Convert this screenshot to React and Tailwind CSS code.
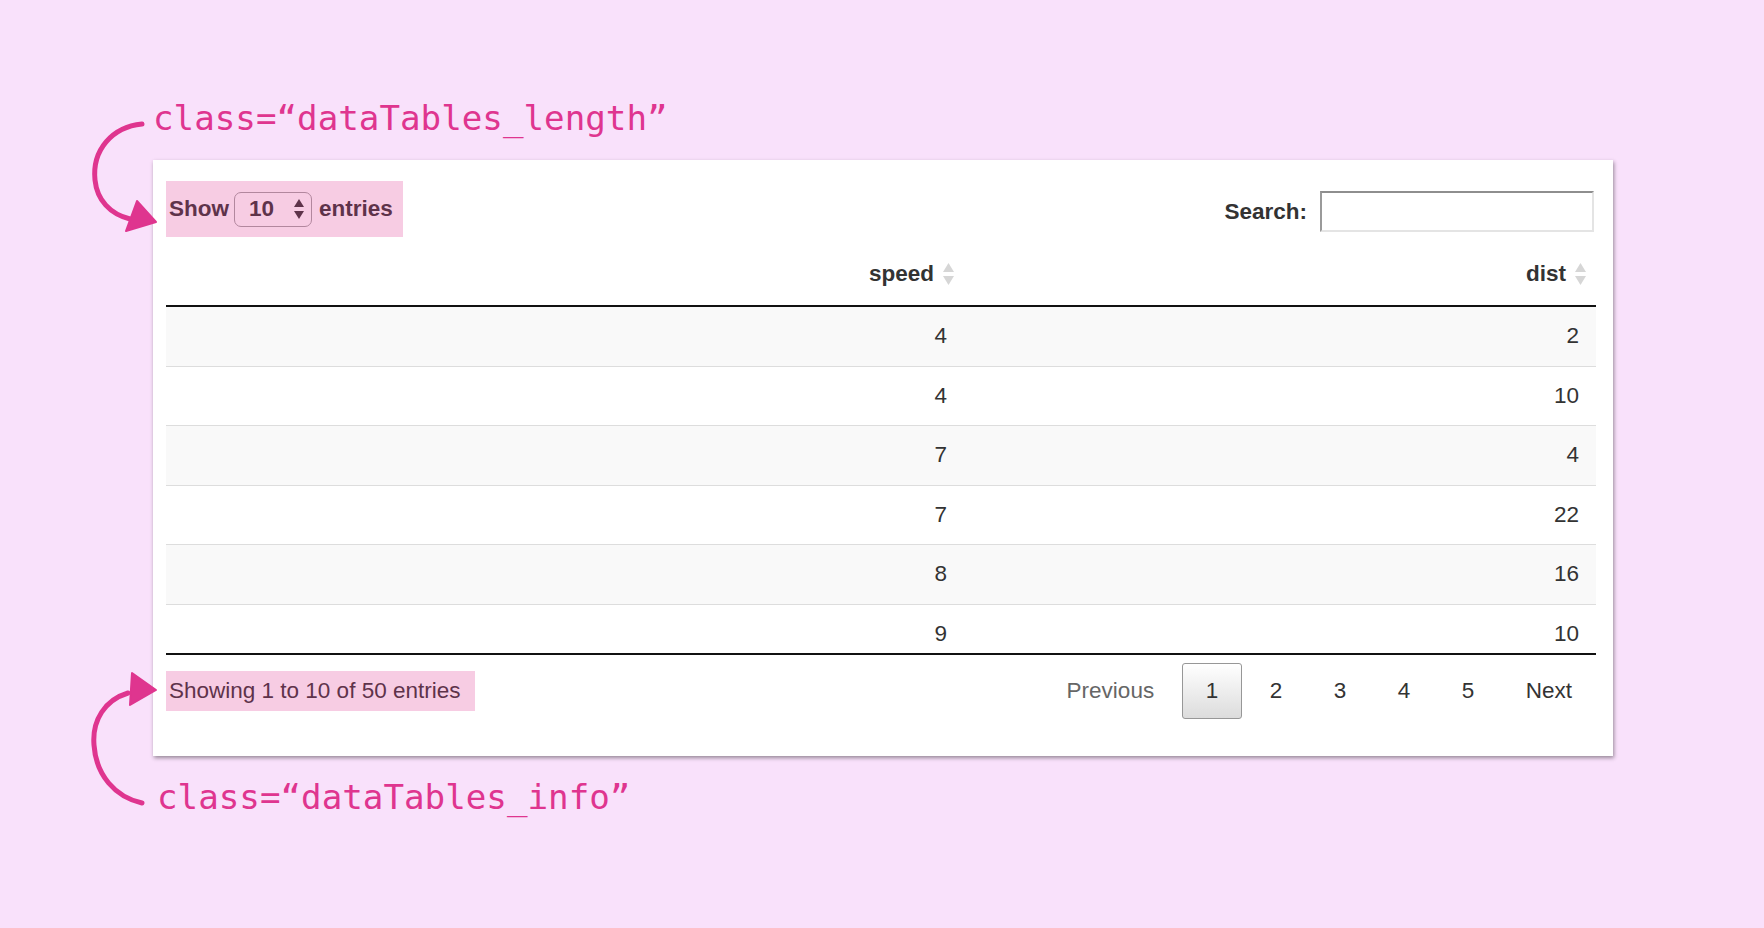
import React from "react";

const rows = [
  [4, 2],
  [4, 10],
  [7, 4],
  [7, 22],
  [8, 16],
  [9, 10],
];

const SortIcon = () => (
  <svg width="13" height="24" viewBox="0 0 13 24" className="shrink-0">
    <path d="M6.5 1 L12 10 L1 10 Z" fill="#d6d6d6" />
    <path d="M6.5 23 L12 14 L1 14 Z" fill="#d6d6d6" />
  </svg>
);

const Highlight = ({ className, children }) => (
  <div className={"relative " + className}>
    {children}
    {/* pink marker on top of the widget */}
    <div className="absolute inset-0 bg-[#e0358e]/25 pointer-events-none"></div>
  </div>
);

const PageButton = ({ children, active, muted }) => (
  <div
    className={
      "ml-[3.5px] px-[23px] py-[11px] leading-[32px] border rounded-[3px] " +
      (active
        ? "border-[#979797] bg-gradient-to-b from-white to-[#dcdcdc] text-[#333]"
        : "border-transparent " + (muted ? "text-[#666]" : "text-[#333]"))
    }
  >
    {children}
  </div>
);

export default function App() {
  return (
    <div
      className="relative w-full h-[928px] bg-[#f9e1fb] overflow-hidden"
      style={{ fontFamily: '"Liberation Sans", Arial, sans-serif' }}
    >
      <div className="pl-[153px] pt-[98px]">
        {/* top annotation */}
        <div
          className="h-[40px] leading-[40px] text-[34.2px] text-[#df358f]"
          style={{ fontFamily: '"DejaVu Sans Mono", monospace' }}
        >
          class=“dataTables_length”
        </div>

        {/* the table card */}
        <div className="mt-[22px] w-[1460px] bg-white pt-[21px] pl-[13px] pr-[17px] pb-[37px] shadow-[1px_2px_4px_rgba(0,0,0,0.4)] text-[22.5px] text-[#333]">
          <div className="flex justify-between items-center h-[56px]">
            <Highlight className="flex items-center h-[56px] pl-[3px] pr-[10px] font-bold">
              <span>Show</span>
              <div className="ml-[5px] mr-[7px] flex items-center justify-between w-[78px] h-[35px] pl-[14px] pr-[6px] border border-[#a3a3a3] rounded-[7px] bg-white">
                <span>10</span>
                <svg width="12" height="22" viewBox="0 0 12 22">
                  <path d="M6 1 L11 9 L1 9 Z" fill="#333" />
                  <path d="M6 21 L11 13 L1 13 Z" fill="#333" />
                </svg>
              </div>
              <span>entries</span>
            </Highlight>
            <div className="flex items-center mr-[2px] mt-[5px]">
              <span className="font-bold">Search:</span>
              <div className="ml-[13px] w-[274px] h-[41px] border-2 border-t-[#8e8e8e] border-l-[#9a9a9a] border-r-[#e4e4e4] border-b-[#e4e4e4] bg-white"></div>
            </div>
          </div>

          {/* header */}
          <div className="grid grid-cols-[798px_632px] h-[70px] pt-[6px] border-b-2 border-[#111] font-bold">
            <div className="flex justify-end items-center gap-[8px] pr-[9px]">
              <span>speed</span>
              <SortIcon />
            </div>
            <div className="flex justify-end items-center gap-[8px] pr-[9px]">
              <span>dist</span>
              <SortIcon />
            </div>
          </div>

          {/* scrolling body */}
          <div className="h-[348px] overflow-hidden border-b-2 border-[#111]">
            {rows.map(([speed, dist], i) => (
              <div
                key={i}
                className={
                  "grid grid-cols-[798px_632px] h-[59.5px] border-b border-[#dddddd] " +
                  (i % 2 === 0 ? "bg-[#f9f9f9]" : "bg-white")
                }
              >
                <div className="flex justify-end items-center pr-[17px]">{speed}</div>
                <div className="flex justify-end items-center pr-[17px]">{dist}</div>
              </div>
            ))}
          </div>

          {/* footer */}
          <div className="flex justify-between items-center mt-[8px]">
            <Highlight className="flex items-center h-[40px] pl-[3px] pr-[15px]">
              Showing 1 to 10 of 50 entries
            </Highlight>
            <div className="flex items-center">
              <PageButton muted>Previous</PageButton>
              <PageButton active>1</PageButton>
              <PageButton>2</PageButton>
              <PageButton>3</PageButton>
              <PageButton>4</PageButton>
              <PageButton>5</PageButton>
              <PageButton>Next</PageButton>
            </div>
          </div>
        </div>

        {/* bottom annotation */}
        <div
          className="mt-[21px] ml-[4px] h-[40px] leading-[40px] text-[34.2px] text-[#df358f]"
          style={{ fontFamily: '"DejaVu Sans Mono", monospace' }}
        >
          class=“dataTables_info”
        </div>
      </div>

      {/* hand-drawn arrows */}
      <svg
        className="absolute left-0 top-0 pointer-events-none"
        width="200"
        height="928"
        viewBox="0 0 200 928"
      >
        <g stroke="#df358f" strokeWidth="5" fill="none" strokeLinecap="round">
          <path d="M142 124 C 112 127, 92 150, 95 180 C 97 200, 110 214, 130 219" />
          <path d="M128 693 C 105 700, 92 720, 94 745 C 96 775, 115 797, 142 803" />
        </g>
        <g fill="#df358f" stroke="#df358f" strokeWidth="2" strokeLinejoin="round">
          <path d="M137 201 L126 231 L156 222 Z" />
          <path d="M132 673 L130 705 L156 690 Z" />
        </g>
      </svg>
    </div>
  );
}
